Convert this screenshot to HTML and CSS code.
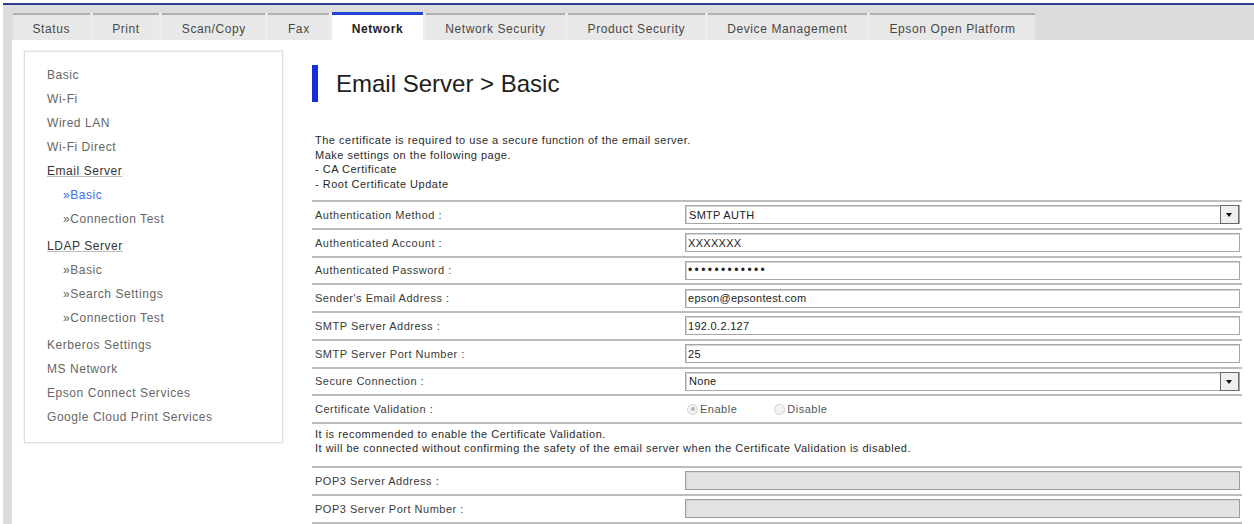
FILE: index.html
```html
<!DOCTYPE html>
<html lang="en">
<head>
  <meta charset="UTF-8" />
  <title>Email Server &gt; Basic</title>
  <link rel="stylesheet" href="styles.css">
</head>
<body>

<div class="frame">
  <ul class="tabs">
    <li class="tab">Status</li>
    <li class="tab">Print</li>
    <li class="tab">Scan/Copy</li>
    <li class="tab">Fax</li>
    <li class="tab active">Network</li>
    <li class="tab">Network Security</li>
    <li class="tab">Product Security</li>
    <li class="tab">Device Management</li>
    <li class="tab">Epson Open Platform</li>
  </ul>

  <div class="content">
    <div class="side">
      <ul class="menu">
        <li>Basic</li>
        <li>Wi-Fi</li>
        <li>Wired LAN</li>
        <li>Wi-Fi Direct</li>
        <li class="group">Email Server</li>
        <li class="sub current">&raquo;Basic</li>
        <li class="sub last">&raquo;Connection Test</li>
        <li class="group">LDAP Server</li>
        <li class="sub">&raquo;Basic</li>
        <li class="sub">&raquo;Search Settings</li>
        <li class="sub last">&raquo;Connection Test</li>
        <li>Kerberos Settings</li>
        <li>MS Network</li>
        <li>Epson Connect Services</li>
        <li>Google Cloud Print Services</li>
      </ul>
    </div>

    <div class="main">
      <h1 class="title">Email Server &gt; Basic</h1>

      <p class="note">
        The certificate is required to use a secure function of the email server.<br>
        Make settings on the following page.<br>
        - CA Certificate<br>
        - Root Certificate Update
      </p>

      <div class="form">
        <div class="row">
          <div class="label">Authentication Method :</div>
          <div class="field">
            <div class="select">
              <select class="input"><option>SMTP AUTH</option></select>
              <span class="arrow"></span>
            </div>
          </div>
        </div>
        <div class="row">
          <div class="label">Authenticated Account :</div>
          <div class="field"><input class="input" type="text" value="XXXXXXX"></div>
        </div>
        <div class="row">
          <div class="label">Authenticated Password :</div>
          <div class="field"><input class="input pass" type="password" value="xxxxxxxxxxxx"></div>
        </div>
        <div class="row">
          <div class="label">Sender's Email Address :</div>
          <div class="field"><input class="input" type="text" value="epson@epsontest.com"></div>
        </div>
        <div class="row">
          <div class="label">SMTP Server Address :</div>
          <div class="field"><input class="input" type="text" value="192.0.2.127"></div>
        </div>
        <div class="row">
          <div class="label">SMTP Server Port Number :</div>
          <div class="field"><input class="input" type="text" value="25"></div>
        </div>
        <div class="row">
          <div class="label">Secure Connection :</div>
          <div class="field">
            <div class="select">
              <select class="input"><option>None</option></select>
              <span class="arrow"></span>
            </div>
          </div>
        </div>
        <div class="row">
          <div class="label">Certificate Validation :</div>
          <div class="field radios">
            <span class="radio"><span class="dot on"></span>Enable</span>
            <span class="radio"><span class="dot"></span>Disable</span>
          </div>
        </div>
      </div>

      <p class="note warn">
        It is recommended to enable the Certificate Validation.<br>
        It will be connected without confirming the safety of the email server when the Certificate Validation is disabled.
      </p>

      <div class="form">
        <div class="row">
          <div class="label">POP3 Server Address :</div>
          <div class="field"><input class="input" type="text" disabled></div>
        </div>
        <div class="row">
          <div class="label">POP3 Server Port Number :</div>
          <div class="field"><input class="input" type="text" disabled></div>
        </div>
      </div>
    </div>
  </div>
</div>

</body>
</html>
```

FILE: styles.css
```css
body {
  margin: 0;
  font-family: "Liberation Sans", Arial, sans-serif;
  background: #fff;
  color: #333;
}

.frame {
  margin: 3px 0 0 3px;
  border-top: 2px solid #2d3c93;
  background: #dcdcdc;
  padding-left: 9px;
}

/* top tabs */
.tabs {
  display: flex;
  gap: 3px;
  list-style: none;
  margin: 0;
  padding: 8px 0 0 1px;
}

.tab {
  background: #e8e8e8;
  border-top: 2px solid #b0b0b0;
  padding: 4px 19.5px 0;
  height: 21px;
  line-height: 21px;
  font-size: 12px;
  letter-spacing: 0.6px;
  color: #484848;
  white-space: nowrap;
}

.tab + .tab {
  box-shadow: -3px 0 0 #ececec;
}

.tab.active {
  background: #fff;
  border-top: 3px solid #1f45d6;
  margin-top: -1px;
  font-weight: bold;
  color: #222;
}

.content {
  display: flex;
  align-items: flex-start;
  background: #fff;
  min-height: 484px;
}

/* left menu */
.side {
  width: 259px;
  box-sizing: border-box;
  margin: 11px 0 0 12px;
  padding: 11px 0 13px 22px;
  border: 1px solid #dedede;
  box-shadow: 0 0 2px rgba(0,0,0,0.12);
}

.menu {
  list-style: none;
  margin: 0;
  padding: 0;
  font-size: 12px;
  letter-spacing: 0.55px;
  line-height: 24px;
  color: #666;
}

.menu .group {
  color: #333;
  text-decoration: underline;
  text-decoration-color: #bbb;
}

.menu .sub {
  padding-left: 16px;
}

.menu .last {
  margin-bottom: 3px;
}

.menu .current {
  color: #3d6cf2;
}

/* main area */
.main {
  flex: 1;
  margin: 23px 12px 0 29px;
}

.title {
  display: flex;
  align-items: center;
  height: 37px;
  margin: 0;
  padding-top: 2px;
  font-size: 24px;
  font-weight: normal;
  color: #1e1e1e;
}

.title::before {
  content: "";
  width: 6px;
  height: 37px;
  background: #1630d9;
  margin-right: 18px;
}

.note {
  margin: 31px 0 9px;
  padding-left: 3px;
  font-size: 11px;
  letter-spacing: 0.5px;
  line-height: 14.5px;
  color: #2a2a2a;
}

.note.warn {
  margin: 3px 0 11px;
  line-height: 14px;
}

.form {
  border-bottom: 2px solid #bdbdbd;
}

.row {
  display: flex;
  align-items: center;
  height: 25.75px;
  border-top: 2px solid #bdbdbd;
}

.label {
  width: 370px;
  padding-left: 3px;
  font-size: 11px;
  letter-spacing: 0.5px;
  color: #3a3a3a;
}

.field {
  flex: 1;
  margin-right: 2px;
}

.input {
  display: block;
  box-sizing: border-box;
  width: 100%;
  height: 19px;
  margin: 0;
  padding: 0 2px;
  border: 1px solid #a6a6a6;
  border-radius: 0;
  box-shadow: inset 1px 1px 0 #d6d6d6;
  background: #fff;
  font-family: "Liberation Sans", Arial, sans-serif;
  font-size: 11px;
  letter-spacing: 0.3px;
  color: #222;
  outline: none;
}

.input.pass {
  font-size: 12px;
  letter-spacing: 2.4px;
}

.input:disabled {
  background: #e2e2e2;
  border-color: #9c9c9c;
}

.select {
  position: relative;
}

.select select {
  appearance: none;
  -webkit-appearance: none;
  padding-left: 3px;
}

.select .arrow {
  position: absolute;
  right: 1px;
  top: 0;
  width: 19px;
  height: 19px;
  box-sizing: border-box;
  border: 1px solid #6a6a6a;
  background: #efefef;
}

.select .arrow::after {
  content: "";
  position: absolute;
  left: 5px;
  top: 7px;
  border-left: 3.5px solid transparent;
  border-right: 3.5px solid transparent;
  border-top: 4px solid #111;
}

.radios {
  display: flex;
  align-items: center;
  padding-left: 2px;
  font-size: 11px;
  letter-spacing: 0.5px;
  color: #555;
}

.radio {
  display: flex;
  align-items: center;
  margin-right: 37px;
}

.dot {
  position: relative;
  width: 11px;
  height: 11px;
  box-sizing: border-box;
  margin-right: 2px;
  border: 1px solid #cfcfcf;
  border-radius: 50%;
  background: #f4f4f4;
}

.dot.on::after {
  content: "";
  position: absolute;
  left: 2.5px;
  top: 2.5px;
  width: 4px;
  height: 4px;
  border-radius: 50%;
  background: #b4b4b4;
}
```
